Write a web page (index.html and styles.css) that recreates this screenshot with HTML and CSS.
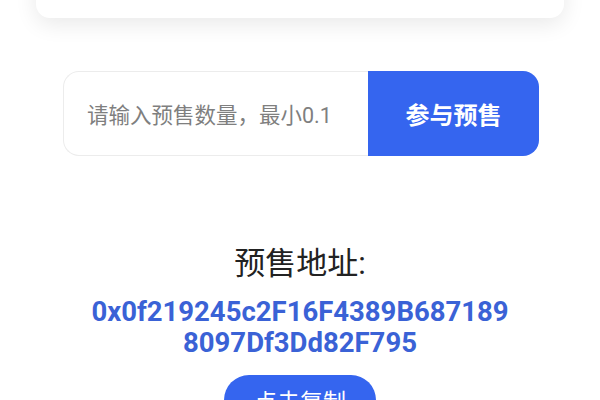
FILE: index.html
```html
<!DOCTYPE html>
<html lang="zh">
<head>
<meta charset="utf-8">
<link rel="stylesheet" href="styles.css">
</head>
<body>
<div class="page">
  <div class="top-card"></div>
  <div class="buy-row">
    <div class="buy-input">请输入预售数量，最小0.1</div>
    <div class="buy-btn">参与预售</div>
  </div>
  <div class="addr-title">预售地址:</div>
  <div class="addr">0x0f219245c2F16F4389B687189<br>8097Df3Dd82F795</div>
  <div class="copy-wrap"><div class="copy-btn">点击复制</div></div>
</div>
</body>
</html>
```
FILE: styles.css
```css
html, body {
  margin: 0;
  padding: 0;
  background: #ffffff;
  width: 600px;
  height: 400px;
  overflow: hidden;
  font-family: Roboto, "Noto Sans CJK SC", sans-serif;
}
.page {
  display: flex;
  flex-direction: column;
}
.top-card {
  height: 100px;
  margin: -82px 36px 0 36px;
  background: #ffffff;
  border-radius: 14px;
  box-shadow: 0 6px 22px rgba(0, 0, 0, 0.09);
}
.buy-row {
  display: flex;
  margin: 53px 61px 0 63px;
  height: 85px;
}
.buy-input {
  flex: 1;
  display: flex;
  align-items: center;
  padding-left: 23px;
  border: 1px solid #ececec;
  border-right: none;
  border-radius: 16px 0 0 16px;
  font-size: 21.5px;
  color: #7f7f7f;
}
.buy-btn {
  width: 171px;
  display: flex;
  align-items: center;
  justify-content: center;
  background: #3565ef;
  border-radius: 0 16px 16px 0;
  color: #ffffff;
  font-size: 24px;
  font-weight: 700;
}
.addr-title {
  margin-top: 88px;
  text-align: center;
  font-size: 31px;
  line-height: 40px;
  color: #222222;
}
.addr {
  margin-top: 12px;
  text-align: center;
  font-size: 27.5px;
  line-height: 31px;
  font-weight: 700;
  color: #3a62d6;
}
.copy-wrap {
  display: flex;
  justify-content: center;
  margin-top: 17px;
}
.copy-btn {
  width: 152px;
  height: 50px;
  border-radius: 25px;
  background: #3565ef;
  color: #ffffff;
  font-size: 23px;
  display: flex;
  align-items: center;
  justify-content: center;
}
```
